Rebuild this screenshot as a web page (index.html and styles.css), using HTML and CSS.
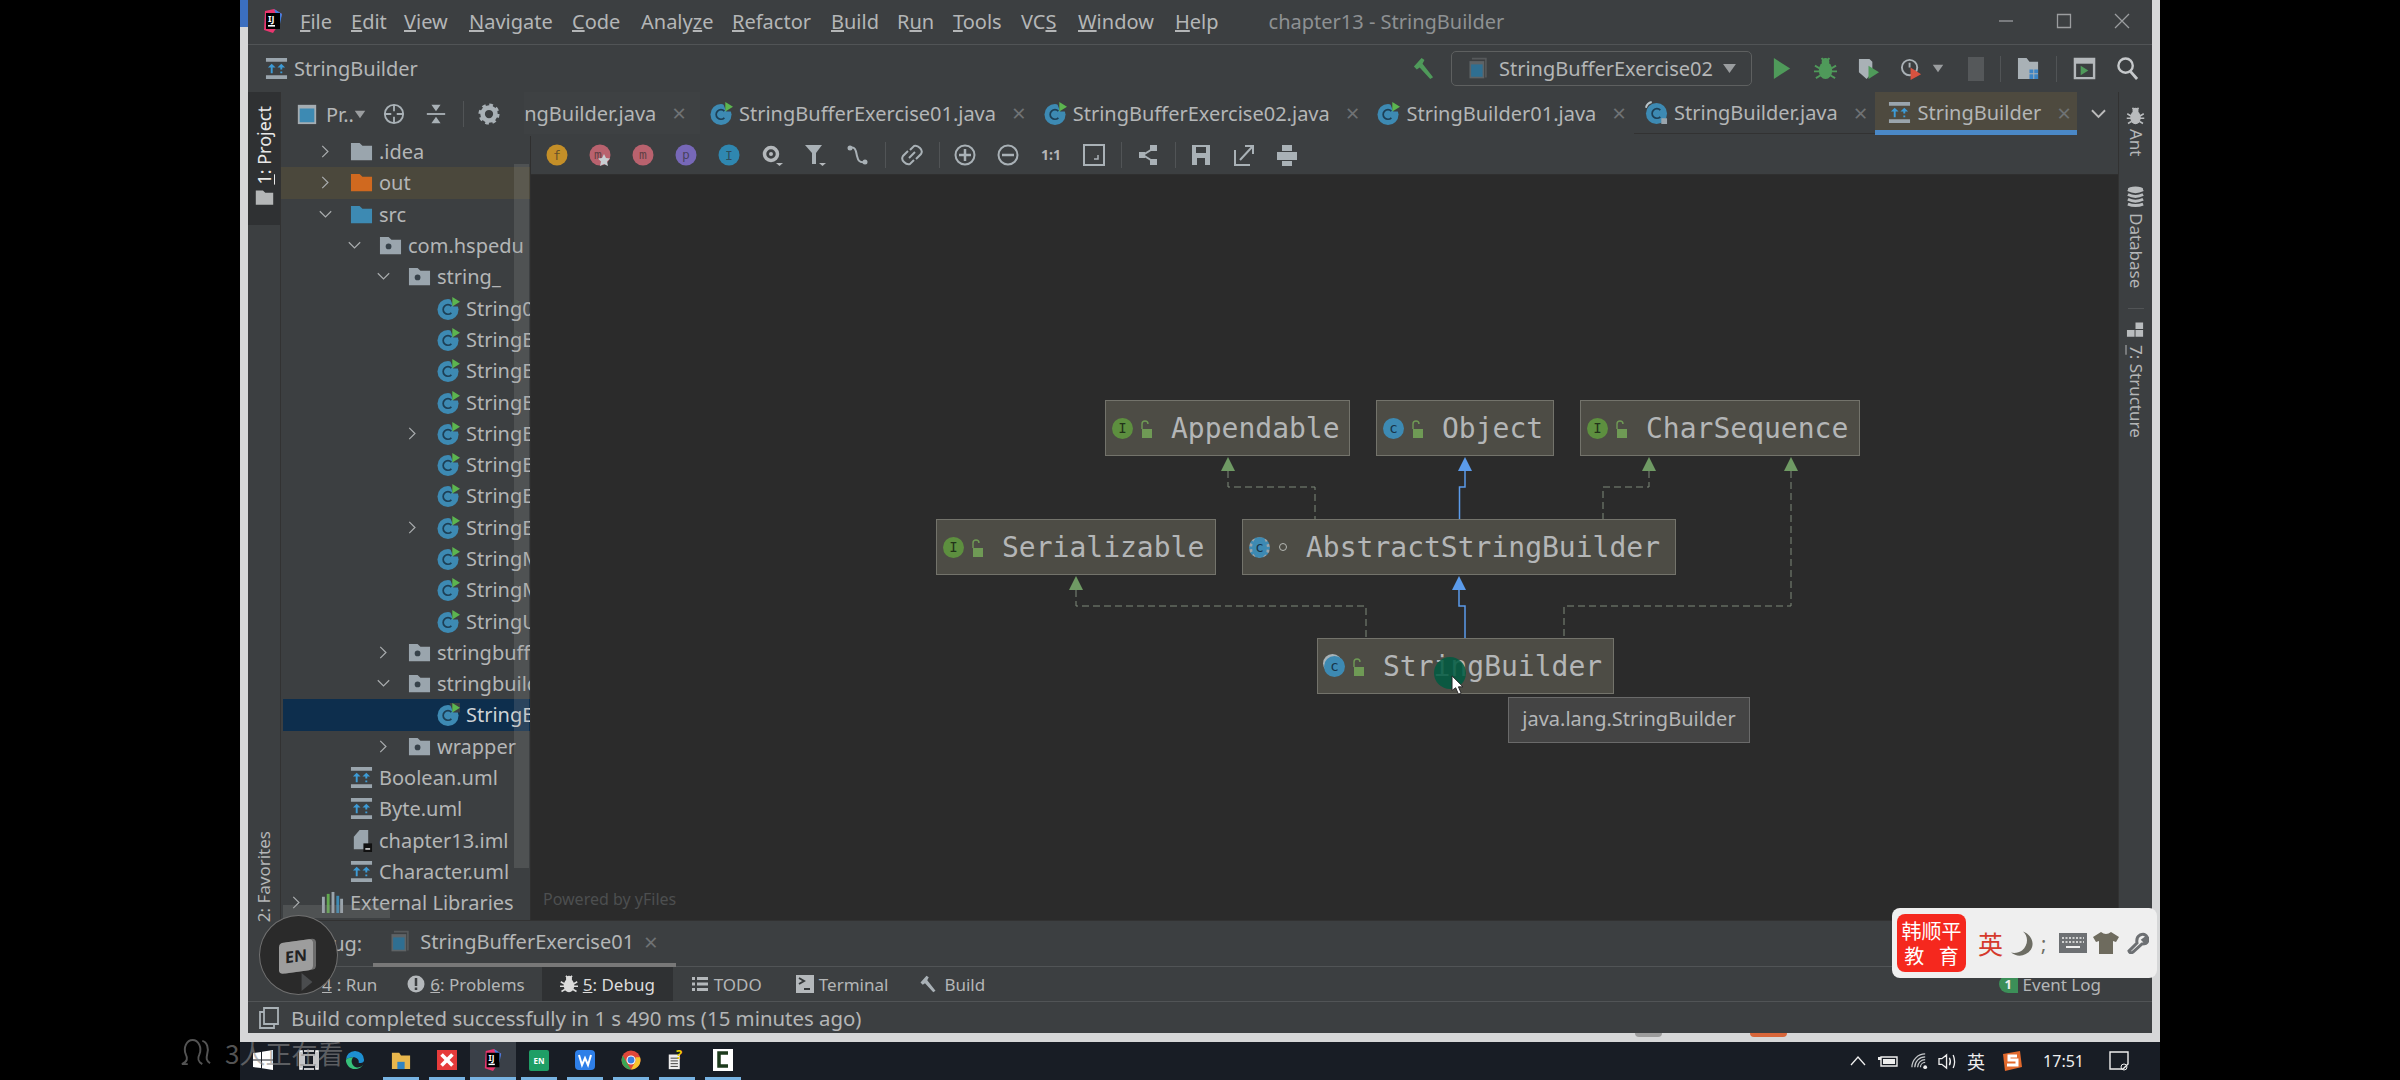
FILE: index.html
```html
<!DOCTYPE html>
<html lang="en">
<head>
  <meta charset="UTF-8" />
  <title>chapter13 - StringBuilder</title>
  <link rel="stylesheet" href="styles.css">
</head>
<body>
  <svg class="sprites" xmlns="http://www.w3.org/2000/svg">
    <symbol id="folder" viewBox="0 0 24 24"><path d="M1 3h9l3 3h10v15H1z"/></symbol>
    <symbol id="pkg" viewBox="0 0 24 24"><path fill="#9aa5ad" d="M1 3h9l3 3h10v15H1z"/><circle cx="10" cy="13" r="3" fill="#37424a"/></symbol>
    <symbol id="classrun" viewBox="0 0 24 24"><circle cx="11.5" cy="13" r="11" fill="#3d8ab3"/><path d="M15 9.5a5 5 0 1 0 0 7" fill="none" stroke="#1d3f55" stroke-width="1.8"/><path fill="#3c3f41" d="M13 0h11v10H17z"/><path fill="#5cb54f" d="M16 0l8 5-8 5z"/></symbol>
    <symbol id="classlib" viewBox="0 0 24 24"><circle cx="12" cy="13" r="11" fill="#3d8ab3"/><path d="M16 9.5a5 5 0 1 0 0 7" fill="none" stroke="#1d3f55" stroke-width="1.8"/><path fill="none" stroke="#b9c4c9" stroke-width="2" d="M1 7q1-5 6-6"/><rect x="17" y="18" width="6" height="6" fill="#9aa5ad"/></symbol>
    <symbol id="uml" viewBox="0 0 24 24"><path fill="#9aa5ad" d="M1 1h22v4H1zM1 19h22v4H1z"/><path fill="#3d9bd6" d="M7 7l4 4H8v6H6v-6H3zM17 7l4 4h-3v2h-2v-2h-3zM16 15h2v2h-2z"/></symbol>
    <symbol id="combo-run" viewBox="0 0 24 28"><path fill="#56595b" d="M4 1h18v24h-2V3H4z"/><rect x="1" y="5" width="18" height="21" fill="#5e6366"/><rect x="3" y="9" width="14" height="15" fill="#2f6f92"/></symbol>
    <symbol id="lock" viewBox="0 0 14 24"><path fill="none" stroke="#6f9a55" stroke-width="1.4" d="M3 12V7a3 3 0 0 1 6 0"/><rect x="3" y="12" width="10" height="9" fill="#6f9a55"/></symbol>
    <symbol id="bugico" viewBox="0 0 24 24"><ellipse cx="12" cy="14" rx="7" ry="9"/><circle cx="12" cy="5" r="4"/><path fill="none" stroke="currentColor" stroke-width="2" d="M1 9l5 3M23 9l-5 3M0 15h6M24 15h-6M2 22l5-3M22 22l-5-3M8 1l2 3M16 1l-2 3"/></symbol>
    <symbol id="hammer" viewBox="0 0 24 24"><path d="M2 10l8-9 3 2-2 4 11 14-3 2L8 11l-3 2z"/></symbol>
  </svg>

  <div class="window">
    <header class="menubar">
      <svg class="logo" viewBox="0 0 22 24"><path fill="#e8366f" d="M3 2l9-2 8 5-3 10-6 9-9-3z"/><path fill="#3d7fe0" d="M12 0l8 5-2 10z"/><rect x="4" y="4" width="14" height="16" fill="#000"/><rect x="6" y="16" width="7" height="1.6" fill="#fff"/><text class="logo-text" x="6" y="13">IJ</text></svg>
      <nav class="menu">
        <span><u>F</u>ile</span><span><u>E</u>dit</span><span><u>V</u>iew</span><span><u>N</u>avigate</span><span><u>C</u>ode</span><span>Analy<u>z</u>e</span><span><u>R</u>efactor</span><span><u>B</u>uild</span><span>R<u>u</u>n</span><span><u>T</u>ools</span><span>VC<u>S</u></span><span><u>W</u>indow</span><span><u>H</u>elp</span>
      </nav>
      <span class="title">chapter13 - StringBuilder</span>
      <div class="win-btns">
        <svg viewBox="0 0 16 16"><path d="M1 8h14"/></svg>
        <svg viewBox="0 0 16 16"><path d="M1.5 1.5h13v13h-13z"/></svg>
        <svg viewBox="0 0 16 16"><path d="M1 1l14 14M15 1L1 15"/></svg>
      </div>
    </header>

    <div class="navbar">
      <svg class="ico-lg"><use href="#uml"/></svg>
      <span class="crumb">StringBuilder</span>
      <div class="run-tools">
        <svg class="ico-lg green"><use href="#hammer"/></svg>
        <div class="combo">
          <svg class="ico-lg"><use href="#combo-run"/></svg>
          <span>StringBufferExercise02</span>
          <svg class="caret" viewBox="0 0 16 12"><path d="M1 1h14L8 11z"/></svg>
        </div>
        <div class="run-icons">
          <svg class="ico-lg" viewBox="0 0 22 24"><path fill="#4f9a5a" d="M2 1l17 11L2 23z"/></svg>
          <svg class="ico-lg green"><use href="#bugico"/></svg>
          <svg class="ico-lg" viewBox="0 0 24 24"><path fill="#a9b1b6" d="M2 2h11l3 3v11l-6 7-8-7z"/><path fill="#4f9a5a" d="M12 9l11 7-11 7z"/></svg>
          <svg class="ico-lg tight" viewBox="0 0 24 24"><circle cx="10" cy="11" r="8" fill="none" stroke="#a9b1b6" stroke-width="2"/><path d="M10 6v5" stroke="#a9b1b6" stroke-width="2"/><path fill="#d9523f" d="M11 11l11 7-11 6z"/></svg>
          <svg class="caret small" viewBox="0 0 16 12"><path d="M1 1h14L8 11z"/></svg>
          <span class="stop"></span>
          <span class="sep tall"></span>
          <svg class="ico-lg" viewBox="0 0 24 24"><path fill="#a9b1b6" d="M1 1h9l3 4h9v18H1z"/><path fill="#3d85c6" d="M13 13h4v4h-4zM18 13h4v4h-4zM13 18h4v5h-4zM18 18h4v5h-4z"/></svg>
          <span class="sep tall"></span>
          <svg class="ico-lg" viewBox="0 0 24 24"><path fill="none" stroke="#b4b8bb" stroke-width="2.5" d="M2 2h20v20H2z"/><path stroke="#b4b8bb" stroke-width="4" d="M2 5h20"/><path fill="#4f9a5a" d="M8 9l8 5-8 5z"/></svg>
          <svg class="ico-lg" viewBox="0 0 24 24"><circle cx="10" cy="9" r="7.5" fill="none" stroke="#c6c9cb" stroke-width="2.5"/><path d="M15 15l7 8" stroke="#c6c9cb" stroke-width="3"/></svg>
        </div>
      </div>
    </div>

    <div class="workspace">
      <aside class="stripe stripe-left">
        <div class="stripe-active">
          <span class="stripe-label bright"><u>1</u>: Project</span>
          <svg class="stripe-folder" viewBox="0 0 24 24" fill="#c9ccce"><use href="#folder"/></svg>
        </div>
        <span class="stripe-label favorites">2: Favorites</span>
      </aside>

      <div class="center">
        <div class="top-area">
          <div class="panel-head">
            <svg class="ico-md" viewBox="0 0 22 24"><rect x="1" y="2" width="20" height="21" fill="#a5adb2"/><rect x="3" y="6" width="16" height="15" fill="#3d8ab3"/></svg>
            <span class="panel-name">Pr..</span>
            <svg class="caret small" viewBox="0 0 16 12"><path d="M1 1h14L8 11z"/></svg>
            <svg class="ico-md stroke locate" viewBox="0 0 24 24"><circle cx="12" cy="12" r="10"/><path d="M12 2v7M12 15v7M2 12h7M15 12h7"/></svg>
            <svg class="ico-md collapse" viewBox="0 0 24 24"><path fill="#a9b1b6" d="M12 9L7 2h10zM12 15l-5 7h10z"/><path stroke="#a9b1b6" stroke-width="2" d="M2 12h20"/></svg>
            <span class="sep tall"></span>
            <svg class="ico-md gear" viewBox="0 0 24 24"><circle cx="12" cy="12" r="7" fill="none" stroke="#a9b1b6" stroke-width="5"/><circle cx="12" cy="12" r="10" fill="none" stroke="#a9b1b6" stroke-width="3" stroke-dasharray="4 3.85"/></svg>
          </div>

          <div class="tabs">
            <div class="tab tab-cut"><span class="tab-clip">ngBuilder.java</span><span class="x">×</span></div>
            <div class="tab"><svg class="ico-lg"><use href="#classrun"/></svg><span>StringBufferExercise01.java</span><span class="x">×</span></div>
            <div class="tab"><svg class="ico-lg"><use href="#classrun"/></svg><span>StringBufferExercise02.java</span><span class="x">×</span></div>
            <div class="tab"><svg class="ico-lg"><use href="#classrun"/></svg><span>StringBuilder01.java</span><span class="x">×</span></div>
            <div class="tab tab-lib"><svg class="ico-lg"><use href="#classlib"/></svg><span>StringBuilder.java</span><span class="x">×</span></div>
            <div class="tab tab-on"><svg class="ico-lg"><use href="#uml"/></svg><span>StringBuilder</span><span class="x">×</span></div>
            <svg class="tabs-more" viewBox="0 0 16 10"><path d="M1 1l7 7 7-7"/></svg>
          </div>

          <div class="tree">
            <div class="row l1"><svg class="chev" viewBox="0 0 12 16"><path d="M2 1l7 7-7 7"/></svg><svg class="ico-lg f-gray"><use href="#folder"/></svg><span>.idea</span></div>
            <div class="row l1 row-out"><svg class="chev" viewBox="0 0 12 16"><path d="M2 1l7 7-7 7"/></svg><svg class="ico-lg f-orange"><use href="#folder"/></svg><span>out</span></div>
            <div class="row l1"><svg class="chev" viewBox="0 0 16 12"><path d="M1 2l7 7 7-7"/></svg><svg class="ico-lg f-blue"><use href="#folder"/></svg><span>src</span></div>
            <div class="row l2"><svg class="chev" viewBox="0 0 16 12"><path d="M1 2l7 7 7-7"/></svg><svg class="ico-lg"><use href="#pkg"/></svg><span>com.hspedu</span></div>
            <div class="row l3"><svg class="chev" viewBox="0 0 16 12"><path d="M1 2l7 7 7-7"/></svg><svg class="ico-lg"><use href="#pkg"/></svg><span>string_</span></div>
            <div class="row l4"><i class="chev"></i><svg class="ico-lg"><use href="#classrun"/></svg><span>String01</span></div>
            <div class="row l4"><i class="chev"></i><svg class="ico-lg"><use href="#classrun"/></svg><span>StringBuffer01</span></div>
            <div class="row l4"><i class="chev"></i><svg class="ico-lg"><use href="#classrun"/></svg><span>StringBuffer02</span></div>
            <div class="row l4"><i class="chev"></i><svg class="ico-lg"><use href="#classrun"/></svg><span>StringBufferExercise01</span></div>
            <div class="row l4"><svg class="chev" viewBox="0 0 12 16"><path d="M2 1l7 7-7 7"/></svg><svg class="ico-lg"><use href="#classrun"/></svg><span>StringBufferExercise02</span></div>
            <div class="row l4"><i class="chev"></i><svg class="ico-lg"><use href="#classrun"/></svg><span>StringBuilder01</span></div>
            <div class="row l4"><i class="chev"></i><svg class="ico-lg"><use href="#classrun"/></svg><span>StringExercise01</span></div>
            <div class="row l4"><svg class="chev" viewBox="0 0 12 16"><path d="M2 1l7 7-7 7"/></svg><svg class="ico-lg"><use href="#classrun"/></svg><span>StringExercise02</span></div>
            <div class="row l4"><i class="chev"></i><svg class="ico-lg"><use href="#classrun"/></svg><span>StringMethod01</span></div>
            <div class="row l4"><i class="chev"></i><svg class="ico-lg"><use href="#classrun"/></svg><span>StringMethod02</span></div>
            <div class="row l4"><i class="chev"></i><svg class="ico-lg"><use href="#classrun"/></svg><span>StringUtil</span></div>
            <div class="row l3"><svg class="chev" viewBox="0 0 12 16"><path d="M2 1l7 7-7 7"/></svg><svg class="ico-lg"><use href="#pkg"/></svg><span>stringbuffer</span></div>
            <div class="row l3"><svg class="chev" viewBox="0 0 16 12"><path d="M1 2l7 7 7-7"/></svg><svg class="ico-lg"><use href="#pkg"/></svg><span>stringbuilder</span></div>
            <div class="row l4 row-sel"><i class="chev"></i><svg class="ico-lg"><use href="#classrun"/></svg><span>StringBuilder01</span></div>
            <div class="row l3"><svg class="chev" viewBox="0 0 12 16"><path d="M2 1l7 7-7 7"/></svg><svg class="ico-lg"><use href="#pkg"/></svg><span>wrapper</span></div>
            <div class="row l1"><i class="chev"></i><svg class="ico-lg"><use href="#uml"/></svg><span>Boolean.uml</span></div>
            <div class="row l1"><i class="chev"></i><svg class="ico-lg"><use href="#uml"/></svg><span>Byte.uml</span></div>
            <div class="row l1"><i class="chev"></i><svg class="ico-lg" viewBox="0 0 24 24"><path fill="#9aa5ad" d="M10 1h9v20H4V8z"/><rect x="14" y="15" width="9" height="9" fill="#111"/><rect x="16" y="20" width="5" height="1.6" fill="#ddd"/></svg><span>chapter13.iml</span></div>
            <div class="row l1"><i class="chev"></i><svg class="ico-lg"><use href="#uml"/></svg><span>Character.uml</span></div>
            <div class="row l0"><svg class="chev" viewBox="0 0 12 16"><path d="M2 1l7 7-7 7"/></svg><svg class="ico-lg" viewBox="0 0 24 24"><path fill="#9aa5ad" d="M1 6h3v17H1zM20 8h3v15h-3z"/><path fill="#62a84f" d="M6 3h3v20H6z"/><path fill="#9aa5ad" d="M11 1h3v22h-3z"/><path fill="#3d8ab3" d="M16 5h3v18h-3z"/></svg><span>External Libraries</span></div>
            <div class="tree-vbar"></div>
            <div class="tree-hbar"></div>
          </div>

          <main class="editor">
            <div class="uml-tools">
              <svg class="ub" viewBox="0 0 22 22"><circle cx="11" cy="11" r="10.5" fill="#c48f28"/><text class="ub-t" x="11" y="16">f</text></svg>
              <svg class="ub" viewBox="0 0 22 22"><circle cx="11" cy="11" r="10.5" fill="#b9626e"/><text class="ub-t" x="9" y="15">m</text><path fill="#c8ced2" d="M15 10l2 4 4 .5-3 3 1 4.5-4-2-4 2 1-4.5-3-3 4-.5z"/></svg>
              <svg class="ub" viewBox="0 0 22 22"><circle cx="11" cy="11" r="10.5" fill="#b9626e"/><text class="ub-t" x="11" y="15">m</text></svg>
              <svg class="ub" viewBox="0 0 22 22"><circle cx="11" cy="11" r="10.5" fill="#7768b8"/><text class="ub-t" x="11" y="15">p</text></svg>
              <svg class="ub" viewBox="0 0 22 22"><circle cx="11" cy="11" r="10.5" fill="#2f87b0"/><text class="ub-t" x="11" y="16">I</text></svg>
              <svg class="ub" viewBox="0 0 22 22"><circle cx="10" cy="10" r="6.5" fill="none" stroke="#b4b8bb" stroke-width="3.5"/><circle cx="10" cy="10" r="2" fill="#b4b8bb"/><path fill="#b4b8bb" d="M15 19h7l-3.500 3z"/></svg>
              <svg class="ub" viewBox="0 0 22 22"><path fill="#a9b1b6" d="M1 1h17l-6 8v11H8V9z"/><path fill="#b4b8bb" d="M15 19h7l-3.500 3z"/></svg>
              <svg class="ub" viewBox="0 0 22 22"><path fill="none" stroke="#a9b1b6" stroke-width="2" d="M3 4c6-2 6 4 7 8s2 7 8 6"/><circle cx="3" cy="4" r="2.5" fill="#a9b1b6"/><circle cx="18" cy="18" r="2.5" fill="#a9b1b6"/></svg>
              <span class="sep"></span>
              <svg class="ub" viewBox="0 0 22 22"><path fill="none" stroke="#a9b1b6" stroke-width="2" d="M9 6l4-4q3-1 6 2t1 6l-5 5M13 16l-4 4q-3 1-6-2t-1-6l5-5M8 14l6-6"/></svg>
              <span class="sep"></span>
              <svg class="ub" viewBox="0 0 22 22"><circle cx="11" cy="11" r="9.5" fill="none" stroke="#a9b1b6" stroke-width="2"/><path stroke="#a9b1b6" stroke-width="2.5" d="M11 5v12M5 11h12"/></svg>
              <svg class="ub" viewBox="0 0 22 22"><circle cx="11" cy="11" r="9.5" fill="none" stroke="#a9b1b6" stroke-width="2"/><path stroke="#a9b1b6" stroke-width="2.5" d="M5 11h12"/></svg>
              <span class="ub ub-one">1:1</span>
              <svg class="ub" viewBox="0 0 22 22"><path fill="none" stroke="#a9b1b6" stroke-width="2" d="M1 1h20v20H1z"/><path fill="none" stroke="#a9b1b6" stroke-width="1.5" d="M15 11v4h-4"/></svg>
              <span class="sep"></span>
              <svg class="ub" viewBox="0 0 22 22"><path fill="none" stroke="#a9b1b6" stroke-width="2" d="M17 4L6 11l11 7"/><path fill="#a9b1b6" d="M13 1h7v6h-7zM13 15h7v6h-7zM2 8h6v6H2z"/></svg>
              <span class="sep"></span>
              <svg class="ub" viewBox="0 0 22 22"><path fill="#a9b1b6" d="M2 1h18v20H2z"/><path fill="#3c3f41" d="M6 3h10v6H6zM7 14h8v7H7z"/></svg>
              <svg class="ub" viewBox="0 0 22 22"><path fill="none" stroke="#a9b1b6" stroke-width="2" d="M2 6v15h15M7 16L19 3M12 2h8v8"/></svg>
              <svg class="ub" viewBox="0 0 22 22"><path fill="#a9b1b6" d="M6 1h10v6H6zM1 8h20v8H1zM6 17h10v5H6z"/></svg>
            </div>

            <div class="canvas">
              <svg class="edges" viewBox="531 175 1587 745">
                <g class="dash">
                  <path d="M1228 471V487H1315V519"/>
                  <path d="M1649 471V487H1603V519"/>
                  <path d="M1791 471V606H1564V638"/>
                  <path d="M1076 590V606H1366V638"/>
                </g>
                <g class="solid">
                  <path d="M1465 471V487H1459.5V519"/>
                  <path d="M1459 590V606H1465V638"/>
                </g>
                <g class="head-green">
                  <path d="M1228 457l-7 14h14z"/>
                  <path d="M1649 457l-7 14h14z"/>
                  <path d="M1791 457l-7 14h14z"/>
                  <path d="M1076 576l-7 14h14z"/>
                </g>
                <g class="head-blue">
                  <path d="M1465 457l-7 14h14z"/>
                  <path d="M1459 576l-7 14h14z"/>
                </g>
              </svg>

              <div class="node n-appendable"><b class="kind k-i">I</b><svg class="lock"><use href="#lock"/></svg><span>Appendable</span></div>
              <div class="node n-object"><b class="kind k-c">c</b><svg class="lock"><use href="#lock"/></svg><span>Object</span></div>
              <div class="node n-charseq"><b class="kind k-i">I</b><svg class="lock"><use href="#lock"/></svg><span>CharSequence</span></div>
              <div class="node n-serial"><b class="kind k-i">I</b><svg class="lock"><use href="#lock"/></svg><span>Serializable</span></div>
              <div class="node n-abstract"><b class="kind k-c k-abs">c</b><i class="pkg-dot"></i><span>AbstractStringBuilder</span></div>
              <div class="node n-builder"><b class="kind k-c k-lib">c</b><svg class="lock"><use href="#lock"/></svg><span>StringBuilder</span></div>
              <div class="tip">java.lang.StringBuilder</div>
              <div class="click-blob"></div>
              <svg class="cursor" viewBox="0 0 14 22"><path fill="#fff" stroke="#222" d="M1 1v16l4-3 3 7 3-1-3-7h5z"/></svg>
              <div class="yfiles">Powered by yFiles</div>
            </div>
          </main>
        </div>

        <div class="debug-bar">
          <span class="debug-name">Debug:</span>
          <div class="debug-tab">
            <svg class="ico-lg"><use href="#combo-run"/></svg>
            <span>StringBufferExercise01</span>
            <span class="x">×</span>
          </div>
        </div>
      </div>

      <aside class="stripe stripe-right">
        <svg class="rs-ico rs-ant" viewBox="0 0 24 24"><use href="#bugico"/></svg>
        <span class="stripe-label">Ant</span>
        <svg class="rs-ico rs-db" viewBox="0 0 20 22"><path fill="none" stroke="#b9bcbe" stroke-width="3" d="M2 4q8 4 16 0M2 9q8 4 16 0M2 14q8 4 16 0M2 19q8 3 16 0"/><ellipse cx="10" cy="3" rx="8" ry="2.5" fill="#b9bcbe"/></svg>
        <span class="stripe-label">Database</span>
        <span class="rs-sep"></span>
        <svg class="rs-ico rs-st" viewBox="0 0 20 16"><path fill="#b9bcbe" d="M10 0h8v7h-8zM1 8h8v7H1zM10 8h8v7h-8z"/></svg>
        <span class="stripe-label"><u>7</u>: Structure</span>
      </aside>
    </div>

    <div class="toolstrip">
      <span class="tool t-run"><u>4</u>: Run</span>
      <span class="tool t-problems"><svg class="ico-sm" viewBox="0 0 18 18"><circle cx="9" cy="9" r="8.5" fill="#b4b8bb"/><path stroke="#3c3f41" stroke-width="2.5" d="M9 3v8M9 12.5V15"/></svg><span><u>6</u>: Problems</span></span>
      <span class="tool t-debug"><svg class="ico-sm"><use href="#bugico"/></svg><span><u>5</u>: Debug</span></span>
      <span class="tool t-todo"><svg class="ico-sm" viewBox="0 0 18 18"><path fill="#b4b8bb" d="M1 2h3v3H1zM6 2h11v3H6zM1 7.5h3v3H1zM6 7.5h11v3H6zM1 13h3v3H1zM6 13h11v3H6z"/></svg><span>TODO</span></span>
      <span class="tool t-term"><svg class="ico-sm" viewBox="0 0 18 18"><path fill="#b4b8bb" d="M0 0h18v18H0z"/><path fill="none" stroke="#34383a" stroke-width="2" d="M3 3l5 3-5 3M8 14h6"/></svg><span>Terminal</span></span>
      <span class="tool t-build"><svg class="ico-sm build-ico"><use href="#hammer"/></svg><span>Build</span></span>
      <span class="tool t-log"><b class="log-badge">1</b>Event Log</span>
    </div>

    <footer class="statusbar">
      <svg class="ico-md" viewBox="0 0 20 22"><path fill="none" stroke="#a9b1b6" stroke-width="1.8" d="M5 1h14v16H5zM5 5H1v16h14v-4"/></svg>
      <span>Build completed successfully in 1 s 490 ms (15 minutes ago)</span>
    </footer>
    <i class="peek peek-gray"></i>
    <i class="peek peek-orange"></i>
  </div>

  <div class="taskbar">
    <span class="task"><svg class="task-ico" viewBox="0 0 20 20"><path fill="#fff" d="M0 3l8-1v7.5H0zM9 1.800L20 0v9.5H9zM0 10.5h8V18l-8-1zM9 10.5h11V20L9 18.200z"/></svg></span>
    <span class="task"><svg class="task-ico" viewBox="0 0 20 20"><path fill="none" stroke="#fff" stroke-width="1.5" d="M1 1h2v18H1zM5 5h10v10H5zM17 1h2v18h-2zM5 1h10M5 19h10"/></svg></span>
    <span class="task"><svg class="task-ico" viewBox="0 0 22 22"><path fill="#1d8fd1" d="M1 11a10 10 0 0 1 20 0c0 3-3 4-6 3 1-3-2-6-6-6-3 0-7 1-8 3z"/><path fill="#36c07a" d="M1 11c1-2 5-3 8-3-3 3-2 9 3 11 5 1 8-2 9-5-2 5-6 7-10 7-6 0-10-5-10-10z"/></svg></span>
    <span class="task open"><svg class="task-ico" viewBox="0 0 22 22"><path fill="#e8b64c" d="M1 3h8l2 3h10v15H1z"/><path fill="#2f83c4" d="M7 13h8v8H7z"/></svg></span>
    <span class="task open"><svg class="task-ico" viewBox="0 0 22 22"><rect width="22" height="22" fill="#e63b3b"/><path stroke="#fff" stroke-width="4" d="M5 5l12 12M17 5L5 17"/></svg></span>
    <span class="task open task-on"><svg class="task-ico" viewBox="0 0 22 24"><path fill="#e8366f" d="M3 2l9-2 8 5-3 10-6 9-9-3z"/><path fill="#3d7fe0" d="M12 0l8 5-2 10z"/><rect x="4" y="4" width="14" height="16" fill="#000"/><rect x="6" y="16" width="7" height="1.6" fill="#fff"/><text class="logo-text" x="6" y="13">IJ</text></svg></span>
    <span class="task open"><svg class="task-ico" viewBox="0 0 20 22"><path fill="#1f9e66" d="M2 1h16q2 0 2 2v17q0 2-2 2H2q-2 0-2-2V3q0-2 2-2z"/><text class="en-t" x="10" y="15">EN</text></svg></span>
    <span class="task open"><svg class="task-ico" viewBox="0 0 20 22"><rect y="1" width="20" height="20" rx="4" fill="#2e7fe8"/><path fill="none" stroke="#fff" stroke-width="2" d="M4 6l3 10 3-7 3 7 3-10"/></svg></span>
    <span class="task open"><svg class="task-ico" viewBox="0 0 22 22"><circle cx="11" cy="11" r="10.5" fill="#e0483a"/><path fill="#3aa655" d="M11 21.5A10.5 10.5 0 0 1 2 6l5 9z"/><path fill="#f7c52d" d="M21 8a10.5 10.5 0 0 1-10 13.5l5-9V8z"/><circle cx="11" cy="11" r="5" fill="#fff"/><circle cx="11" cy="11" r="3.8" fill="#3a7fe0"/></svg></span>
    <span class="task open"><svg class="task-ico" viewBox="0 0 20 24"><path fill="#eee" d="M1 6h12v16H1z"/><path stroke="#333" d="M3 10h8M3 13h8M3 16h8M3 19h8"/><text class="q-t" x="9" y="11">?</text></svg></span>
    <span class="task open"><svg class="task-ico" viewBox="0 0 20 22"><rect width="20" height="22" fill="#fff"/><path fill="none" stroke="#1c3a1c" stroke-width="3.5" d="M15 4H6v13h9"/></svg></span>

    <div class="tray">
      <svg class="tray-caret" viewBox="0 0 16 10"><path d="M1 9l7-8 7 8"/></svg>
      <svg class="tray-bat" viewBox="0 0 20 14"><path fill="none" stroke="#eee" stroke-width="1.4" d="M3 3h16v9H3z"/><path fill="#eee" d="M5 5h12v5H5zM0 3h3v3H0z"/></svg>
      <svg class="tray-wifi" viewBox="0 0 18 18"><path fill="none" stroke="#c6c9cb" stroke-width="1.3" d="M1 15a14 14 0 0 1 14-14M4 15A11 11 0 0 1 15 4M7 15a8 8 0 0 1 8-8M10 15a5 5 0 0 1 5-5"/><circle cx="15" cy="15" r="2" fill="#eee"/></svg>
      <svg class="tray-vol" viewBox="0 0 20 18"><path fill="none" stroke="#eee" stroke-width="1.4" d="M1 6h3l5-4v14l-5-4H1zM12 5q2 4 0 8M16 2q3 7 0 14"/></svg>
      <span class="tray-ime">英</span>
      <svg class="tray-sogou" viewBox="0 0 20 20"><path fill="#e2692c" d="M1 3l17-3 2 16-17 4z"/><path fill="none" stroke="#fff" stroke-width="3" d="M15 5H7v4h8v5H5"/></svg>
      <span class="tray-time">17:51</span>
      <svg class="tray-note" viewBox="0 0 20 20"><path fill="none" stroke="#eee" stroke-width="1.4" d="M1 1h18v12l-5 5H1z"/><circle cx="15" cy="16" r="3" fill="none" stroke="#eee"/></svg>
    </div>
  </div>

  <div class="viewers"><svg viewBox="0 0 32 32"><path fill="none" stroke="currentColor" stroke-width="2" d="M8 28H2c6-3 6-6 4-10-3-7 1-15 7-15s10 8 7 15c-2 4-2 7 3 10M23 4c5 1 7 8 5 14-1 4-1 6 3 9"/></svg><span>3人正在看</span></div>

  <div class="en-float"><div class="en-cube">EN</div><svg class="en-run" viewBox="0 0 14 22"><path fill="#4a4c4e" d="M1 1l12 10L1 21z"/></svg></div>

  <div class="ime">
    <div class="ime-logo"><span>韩顺平</span><span class="ime-spread">教 育</span></div>
    <span class="ime-lang">英</span>
    <svg class="ime-moon" viewBox="0 0 24 26"><path fill="#6d6d64" d="M13 1c5 4 6 13-1 19-3 2-7 3-11 2 6 5 15 4 20-3 4-7 0-15-8-18z"/></svg>
    <span class="ime-punct">;</span>
    <svg class="ime-kbd" viewBox="0 0 28 20"><rect width="28" height="20" fill="#6d7073"/><path stroke="#efefef" stroke-width="1.6" stroke-dasharray="2 1.5" d="M3 5h22M3 9h22"/><path stroke="#efefef" stroke-width="2" d="M7 14h14"/></svg>
    <svg class="ime-shirt" viewBox="0 0 26 22"><path fill="#6e6b5e" d="M8 0q5 4 10 0l8 5-3 5-3-1v13H6V9l-3 1-3-5z"/></svg>
    <svg class="ime-tool" viewBox="0 0 22 22"><path fill="none" stroke="#6d7073" stroke-width="3" d="M13 3q5-2 7 2l-4 3 1 1 4-2q0 5-6 5L6 20q-3 2-4-1l8-8q-1-6 3-8z"/></svg>
  </div>
</body>
</html>
```

FILE: styles.css
```css
* {
  box-sizing: border-box;
}

html, body {
  margin: 0;
  height: 1080px;
  overflow: hidden;
  background: #000;
}

body {
  font-family: "Noto Sans", sans-serif;
  font-size: 20px;
  color: #b4b6b7;
}

.sprites {
  position: absolute;
  width: 0;
  height: 0;
}

svg {
  display: block;
  flex: none;
  fill: currentColor;
}

.window {
  position: relative;
  display: flex;
  flex-direction: column;
  width: 1920px;
  height: 1042px;
  margin-left: 240px;
  padding: 0 8px 9px;
  background: linear-gradient(#3b6fc0, #3b6fc0) left top / 8px 27px no-repeat, #d6d7d8;
}

.ico-lg { width: 23px; height: 23px; }
.ico-md { width: 22px; height: 22px; }
.ico-sm { width: 18px; height: 18px; }
.green { color: #4f9a5a; }

.sep {
  display: block;
  flex: none;
  width: 1px;
  height: 26px;
  margin: 0 14.5px 0 -5px;
  background: #515456;
}

.x {
  color: #6f7274;
  font-size: 24px;
  line-height: 1;
}

/* menu */
.menubar {
  display: flex;
  align-items: center;
  height: 45px;
  padding: 0 22px 2px 14px;
  background: #3c3f41;
  border-bottom: 1px solid #515456;
}

.logo { width: 22px; height: 24px; }

.logo-text {
  fill: #fff;
  font-size: 9px;
  font-weight: 700;
}

.menu {
  display: grid;
  grid-template-columns: 51px 53px 65px 103px 69px 91px 99px 66px 56px 68px 57px 97px auto;
  margin-left: 16px;
}

.title {
  margin-left: 50px;
  color: #8e9193;
}

.win-btns {
  display: flex;
  gap: 42px;
  margin-left: auto;
}

.win-btns svg {
  width: 16px;
  height: 16px;
  fill: none;
  stroke: #9b9d9f;
  stroke-width: 1.3;
}

/* nav bar */
.navbar {
  display: flex;
  align-items: center;
  height: 47px;
  padding: 0 13px 0 17px;
  background: #3c3f41;
}

.crumb { margin-left: 6px; }

.run-tools {
  display: flex;
  align-items: center;
  margin-left: auto;
}

.combo {
  display: flex;
  align-items: center;
  gap: 9px;
  width: 301px;
  height: 35px;
  margin: 0 19px 0 16px;
  padding-left: 15px;
  border: 1px solid #5e6060;
  border-radius: 5px;
}

.caret {
  width: 15px;
  height: 11px;
  color: #9a9d9f;
}

.caret.small {
  width: 12px;
  height: 9px;
}

.run-icons {
  display: flex;
  align-items: center;
  gap: 20px;
}

.run-icons .tall { margin: 0 -4px; }

.run-icons .tight { margin-right: -11px; }

.stop {
  width: 16px;
  height: 24px;
  margin-left: 4px;
  background: #55585a;
}

/* workspace */
.workspace {
  display: flex;
  height: 875px;
}

.stripe {
  display: flex;
  flex: none;
  flex-direction: column;
  align-items: center;
  background: #3c3f41;
}

.stripe-left {
  width: 33px;
  border-right: 1px solid #323232;
}

.stripe-right {
  width: 34px;
  padding-top: 15px;
  border-left: 1px solid #323232;
}

.stripe-label {
  font-size: 17px;
  line-height: 22px;
  writing-mode: vertical-rl;
  white-space: nowrap;
}

.stripe-left .stripe-label { transform: rotate(180deg); }

.bright {
  color: #e8e8e8;
  font-size: 18px;
}

.stripe-active {
  display: flex;
  flex-direction: column;
  align-items: center;
  width: 100%;
  height: 133px;
  padding-top: 14px;
  background: #2f3133;
}

.stripe-folder {
  width: 19px;
  height: 19px;
  margin-top: 3px;
}

.favorites {
  margin-top: auto;
  margin-bottom: 45px;
}

.rs-ico { width: 19px; color: #b9bcbe; }
.rs-ant { height: 18px; margin-bottom: 4px; }
.rs-db { height: 21px; margin: 29px 0 6px; }
.rs-st { height: 16px; margin-bottom: 7px; }

.rs-sep {
  width: 16px;
  height: 1px;
  margin: 20px 0 13px;
  background: #515456;
}

.center {
  display: flex;
  flex-direction: column;
  width: 1837px;
}

.top-area {
  display: grid;
  flex: 1;
  grid-template-columns: 243px 7px 1fr;
  grid-template-rows: 44px 1fr;
  min-height: 0;
}

/* project panel */
.panel-head {
  display: flex;
  grid-column: 1;
  align-items: center;
  padding-left: 15px;
  background: #3c3f41;
}

.panel-name { margin: 0 0 0 8px; }

.locate {
  margin-left: 17px;
  fill: none;
  stroke: #a9b1b6;
  stroke-width: 2;
}

.collapse { margin: 0 21px 0 20px; }

.tree {
  position: relative;
  grid-column: 1 / 3;
  overflow: hidden;
  background: #3c3f41;
  border-right: 1px solid #2f2f2f;
}

.row {
  display: flex;
  align-items: center;
  height: 31.3px;
  white-space: nowrap;
}

.row span { margin-left: 6px; }

.l0 { padding-left: 9px; }
.l1 { padding-left: 38px; }
.l2 { padding-left: 67px; }
.l3 { padding-left: 96px; }
.l4 { padding-left: 125px; }

.chev {
  flex: none;
  width: 13px;
  height: 13px;
  margin-right: 18px;
  fill: none;
  stroke: #a9acae;
  stroke-width: 1.5;
}

.f-gray { color: #9aa5ad; }
.f-orange { color: #d0691f; }
.f-blue { color: #3d8ab3; }

.row-out { background: #4b483c; }
.row-sel { margin-left: 2px; padding-left: 123px; background: #0d2e4d; color: #cfd3d6; }

.tree-vbar {
  position: absolute;
  top: 28px;
  right: 1px;
  width: 15px;
  height: 704px;
  background: rgba(150, 150, 150, 0.22);
}

.tree-hbar {
  position: absolute;
  bottom: 2px;
  left: 2px;
  width: 107px;
  height: 13px;
  background: rgba(150, 150, 150, 0.22);
}

/* tabs */
.tabs {
  display: flex;
  grid-column: 2 / 4;
  align-items: flex-start;
  overflow: hidden;
  background: #3c3f41;
  white-space: nowrap;
}

.tab {
  display: flex;
  flex: none;
  align-items: center;
  gap: 6px;
  height: 42px;
  padding: 0 8px 0 10px;
}

.tab .x { margin-left: 10px; }

.tab-cut {
  justify-content: flex-end;
  width: 176px;
  padding: 0 14px 0 0;
  background: #3e4143;
}

.tab-lib {
  padding-left: 11px;
  border-bottom: 1px solid #323232;
}

.tab-on {
  width: 202px;
  height: 43px;
  padding-top: 3px;
  padding-left: 13px;
  background: #4e4a3f;
  border-bottom: 5px solid #4a88c7;
}

.tabs-more {
  width: 15px;
  height: 10px;
  margin: 17px 0 0 14px;
  fill: none;
  stroke: #bbbbbb;
  stroke-width: 2;
}

/* diagram */
.editor {
  display: flex;
  flex-direction: column;
  min-width: 0;
}

.uml-tools {
  display: flex;
  align-items: center;
  height: 39px;
  padding-left: 15px;
  background: #3c3f41;
  border-bottom: 1px solid #2f2f2f;
}

.ub {
  flex: none;
  width: 22px;
  height: 22px;
  margin-right: 21px;
}

.ub-t {
  fill: #2c2c2c;
  fill-opacity: 0.65;
  font-family: "DejaVu Sans Mono", monospace;
  font-size: 13px;
  text-anchor: middle;
}

.ub-one {
  font-size: 14px;
  font-weight: 700;
  line-height: 22px;
  text-align: center;
  white-space: nowrap;
}

.canvas {
  position: relative;
  flex: 1;
  overflow: hidden;
  background: #2b2b2b;
}

.edges {
  position: absolute;
  top: 0;
  left: 0;
  width: 1587px;
  height: 745px;
  fill: none;
}

.dash path {
  stroke: #7f8a7b;
  stroke-width: 1;
  stroke-dasharray: 7 4;
}

.solid path {
  stroke: #5b9bea;
  stroke-width: 1.5;
}

.head-green path { fill: #6f9a64; }
.head-blue path { fill: #5b9bea; }

.node {
  position: absolute;
  display: flex;
  align-items: center;
  height: 56px;
  padding-left: 6px;
  background: #4d4c45;
  border: 1px solid #73736b;
  font-family: "DejaVu Sans Mono", monospace;
  font-size: 28px;
  white-space: nowrap;
}

.kind {
  flex: none;
  width: 21px;
  height: 21px;
  border-radius: 50%;
  font-size: 14px;
  font-weight: 400;
  line-height: 20px;
  text-align: center;
}

.k-i { background: #5d8f3f; color: #22331a; }
.k-c { background: #3d8ab3; color: #173449; }
.k-abs { border-left: 3px dotted #9ba3a8; border-right: 3px dotted #9ba3a8; }
.k-lib { box-shadow: -2px -3px 0 -1px #a8b3b8; }

.lock {
  width: 14px;
  height: 24px;
  margin: 1px 18px 0 6px;
}

.pkg-dot {
  flex: none;
  width: 8px;
  height: 8px;
  margin: 0 19px 0 9px;
  border: 1px solid #b5b8b4;
  border-radius: 50%;
}

.n-appendable { top: 225px; left: 574px; width: 245px; }
.n-object { top: 225px; left: 845px; width: 178px; }
.n-charseq { top: 225px; left: 1049px; width: 280px; }
.n-serial { top: 344px; left: 405px; width: 280px; }
.n-abstract { top: 344px; left: 711px; width: 434px; }
.n-builder { top: 463px; left: 786px; width: 297px; }

.tip {
  position: absolute;
  top: 522px;
  left: 977px;
  width: 242px;
  height: 46px;
  background: #444444;
  border: 1px solid #6a6a6a;
  font-size: 20px;
  line-height: 42px;
  text-align: center;
}

.click-blob {
  position: absolute;
  top: 482px;
  left: 903px;
  width: 32px;
  height: 32px;
  background: rgba(0, 90, 65, 0.85);
  border-radius: 50%;
}

.cursor {
  position: absolute;
  top: 500px;
  left: 920px;
  width: 13px;
  height: 20px;
}

.yfiles {
  position: absolute;
  bottom: 10px;
  left: 12px;
  color: #4d4f50;
  font-size: 16px;
}

/* debug + bottom */
.debug-bar {
  display: flex;
  flex: none;
  align-items: center;
  height: 47px;
  padding-left: 13px;
  background: #3c3f41;
  border-top: 1px solid #323232;
  border-bottom: 1px solid #515456;
}

.debug-tab {
  display: flex;
  align-items: center;
  gap: 8px;
  width: 303px;
  height: 42px;
  margin: 4px 0 0 11px;
  padding: 0 0 4px 16px;
  border-bottom: 4px solid #787878;
}

.debug-tab .x { margin-left: 2px; }

.toolstrip {
  position: relative;
  display: flex;
  align-items: center;
  height: 34px;
  background: #3c3f41;
  font-size: 17px;
}

.tool {
  display: flex;
  align-items: center;
  gap: 5px;
  height: 100%;
}

.t-run { margin-left: 74px; }
.t-problems { margin-left: 30px; }

.t-debug {
  width: 131px;
  margin-left: 17px;
  padding-left: 18px;
  background: #2f3133;
  color: #dcdcdc;
}

.t-todo { margin-left: 18px; }
.t-term { margin-left: 34px; }
.t-build { margin-left: 29px; }
.build-ico { width: 22px; color: #a9b1b6; }

.t-log {
  margin-left: auto;
  margin-right: 51px;
}

.log-badge {
  width: 19px;
  height: 18px;
  background: #3c8f58;
  border-radius: 9px 0 0 9px;
  color: #eee;
  font-size: 13px;
  line-height: 18px;
  text-align: center;
}

.statusbar {
  display: flex;
  align-items: center;
  gap: 11px;
  height: 32px;
  padding-left: 10px;
  background: #3c3f41;
  border-top: 1px solid #515456;
  font-size: 20.4px;
}

.peek {
  position: absolute;
  top: 1033px;
  height: 4px;
  border-radius: 0 0 6px 6px;
}

.peek-gray { left: 1395px; width: 27px; background: #9c9c9c; }
.peek-orange { left: 1510px; width: 37px; background: #d8663a; }

/* windows taskbar */
.taskbar {
  display: flex;
  align-items: stretch;
  width: 1920px;
  height: 38px;
  margin-left: 240px;
  background: #181d25;
}

.task {
  display: flex;
  flex: none;
  align-items: center;
  justify-content: center;
  width: 46px;
  padding-bottom: 3px;
}

.open {
  background: linear-gradient(#77b3e2, #77b3e2) center bottom / 36px 3px no-repeat;
}

.task-on {
  background: linear-gradient(#77b3e2, #77b3e2) center bottom / 100% 3px no-repeat, #3a4048;
}

.task-ico { width: 20px; height: 22px; }

.en-t {
  fill: #fff;
  font-size: 8px;
  font-weight: 700;
  text-anchor: middle;
}

.q-t {
  fill: #f0d000;
  font-size: 14px;
  font-weight: 700;
}

.tray {
  display: flex;
  align-items: center;
  margin-left: auto;
  padding-right: 31px;
  color: #eeeeee;
}

.tray-caret { width: 16px; height: 10px; fill: none; stroke: #eee; stroke-width: 1.3; }
.tray-bat { width: 20px; height: 14px; margin-left: 12px; }
.tray-wifi { width: 17px; height: 17px; margin-left: 13px; }
.tray-vol { width: 19px; height: 17px; margin-left: 10px; }
.tray-ime { margin-left: 10px; font-family: "Noto Sans CJK SC", sans-serif; font-size: 18px; }
.tray-sogou { width: 20px; height: 20px; margin-left: 17px; }
.tray-time { margin-left: 21px; font-size: 16px; }
.tray-note { width: 20px; height: 20px; margin-left: 25px; }

/* floating bits on top of the recording */
.viewers {
  position: absolute;
  top: 1034px;
  left: 180px;
  display: flex;
  align-items: center;
  gap: 14px;
  color: rgba(140, 140, 140, 0.6);
  font-family: "Noto Sans CJK SC", sans-serif;
  font-size: 26px;
}

.viewers svg { width: 31px; height: 31px; }

.en-float {
  position: absolute;
  top: 915px;
  left: 259px;
  width: 79px;
  height: 80px;
  background: #2a2a2a;
  border: 1px solid #707070;
  border-radius: 50%;
}

.en-cube {
  position: absolute;
  top: 25px;
  left: 19px;
  width: 34px;
  height: 31px;
  background: #9d9d9d;
  border-radius: 4px;
  box-shadow: 3px 0 0 #6c6c6c;
  color: #222;
  font-size: 16px;
  font-weight: 700;
  line-height: 31px;
  text-align: center;
  transform: skewY(-8deg);
}

.en-run {
  position: absolute;
  top: 56px;
  left: 40px;
  width: 14px;
  height: 20px;
}

.ime {
  position: absolute;
  top: 908px;
  left: 1892px;
  display: flex;
  align-items: center;
  width: 265px;
  height: 70px;
  padding-left: 5px;
  background: #efefef;
  border-radius: 8px;
}

.ime-logo {
  display: flex;
  flex: none;
  flex-direction: column;
  align-items: center;
  justify-content: center;
  width: 69px;
  height: 58px;
  background: #f5281e;
  border-radius: 8px;
  color: #fff;
  font-family: "Noto Sans CJK SC", sans-serif;
  font-size: 20px;
  line-height: 25px;
}

.ime-spread { word-spacing: 10px; }

.ime-lang {
  margin-left: 12px;
  color: #d53a2c;
  font-family: "Noto Sans CJK SC", sans-serif;
  font-size: 25px;
}

.ime-moon { width: 24px; height: 27px; margin-left: 7px; }
.ime-punct { margin-left: 7px; color: #6d6d64; font-size: 20px; }
.ime-kbd { width: 28px; height: 20px; margin-left: 13px; }
.ime-shirt { width: 26px; height: 22px; margin-left: 6px; }
.ime-tool { width: 22px; height: 22px; margin-left: 8px; }
```
